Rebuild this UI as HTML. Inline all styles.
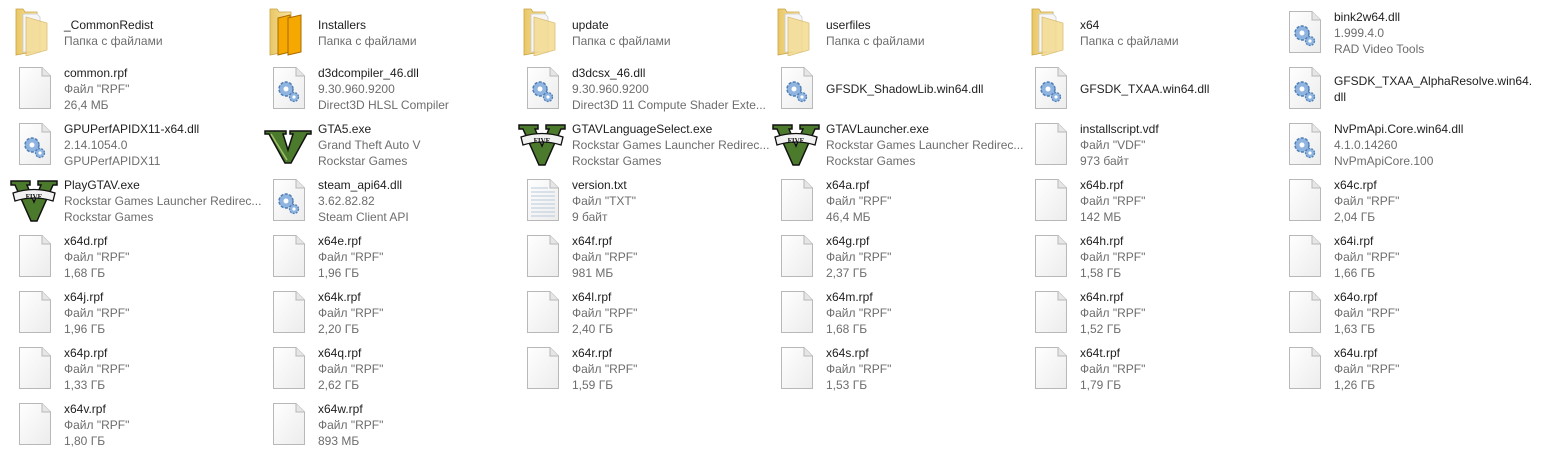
<!DOCTYPE html>
<html><head><meta charset="utf-8">
<style>
html,body{margin:0;padding:0;background:#fff;width:1567px;height:463px;overflow:hidden}
.t{position:absolute;width:254px;height:56px}
.t svg{position:absolute;left:10px;top:8px;width:48px;height:48px}
.x{position:absolute;left:64px;top:calc(50% + 5px);transform:translateY(-50%);font:12px "Liberation Sans","Noto Sans CJK SC",sans-serif;line-height:16px;color:#1e1e1e;white-space:nowrap}
.x span{display:block;color:#6d6d6d}
</style></head><body>
<svg width="0" height="0" style="position:absolute">
<defs>
<linearGradient id="pg" x1="0" y1="0" x2="1" y2="1"><stop offset="0" stop-color="#fff"/><stop offset="1" stop-color="#ececec"/></linearGradient>
<linearGradient id="fy" x1="0" y1="0" x2="1" y2="0"><stop offset="0" stop-color="#e9c766"/><stop offset="1" stop-color="#f8e4a0"/></linearGradient>
<symbol id="doc" viewBox="0 0 48 48"><path d="M9.5 3.5H32L40.5 12V44.5H9.5Z" fill="url(#pg)" stroke="#b8b8b8"/><path d="M32 3.5V12H40.5" fill="#e6e6e6" stroke="#b8b8b8"/></symbol>
<symbol id="dll" viewBox="0 0 48 48"><use href="#doc"/><circle cx="22" cy="25" r="7" fill="#8fb4e0" stroke="#4f7fb6" stroke-width="1.5" stroke-dasharray="3 1.5"/><circle cx="22" cy="25" r="2.5" fill="#fff"/><circle cx="30" cy="33" r="4.5" fill="#8fb4e0" stroke="#4f7fb6" stroke-width="1.3" stroke-dasharray="2 1.2"/><circle cx="30" cy="33" r="1.6" fill="#fff"/></symbol>
<symbol id="txt" viewBox="0 0 48 48"><use href="#doc"/><g stroke="#b9c8dc"><path d="M13 12H30M13 16H37M13 20H37M13 24H37M13 28H37M13 32H37M13 36H37M13 40H37"/></g></symbol>
<symbol id="fold" viewBox="0 0 48 48"><path d="M6 1H13L15 4H27V43L6 47Z" fill="url(#fy)" stroke="#c9a446" stroke-width=".8"/><path d="M13 6H27L30 9V44H13Z" fill="#f6f6f6" stroke="#ccc" stroke-width=".8"/><path d="M16 9L37 15V42L16 48Z" fill="#f3d988" opacity=".8" stroke="#d2b05a" stroke-width=".8"/></symbol>
<symbol id="foldo" viewBox="0 0 48 48"><path d="M6 1H13L15 4H27V43L6 47Z" fill="url(#fy)" stroke="#c9a446" stroke-width=".8"/><path d="M14 10L26 7V44L14 47Z" fill="#f5a800" stroke="#a86a00"/><path d="M24 10L37 7V44L24 47Z" fill="#f5a800" stroke="#a86a00"/></symbol>
<symbol id="v" viewBox="0 0 48 48"><path d="M1 11H22V14H19L24 30L29 14H26V11H47V14H43L27 43H21L5 14H1Z" fill="#4c7a2c" stroke="#111" stroke-width="1.5"/><path d="M7 14L23 40" stroke="#9bc06a" stroke-width="1.5"/></symbol>
<symbol id="v5" viewBox="0 0 48 48"><path d="M1 5H20V9H17L24 26L31 9H28V5H47V9H43L27 45H21L5 9H1Z" fill="#4c7a2c" stroke="#111" stroke-width="1.5"/><path d="M3 17Q24 10 45 17L43 25Q24 19 5 25Z" fill="#f2f2f2" stroke="#111" stroke-width="1.3"/><text x="24" y="23" font-size="7" font-weight="bold" text-anchor="middle" font-family="Liberation Serif,serif" fill="#111">FIVE</text></symbol>
</defs></svg>

<div class="t" style="left:0;top:0"><svg><use href="#fold"/></svg><div class="x">_CommonRedist<span>Папка с файлами</span></div></div>
<div class="t" style="left:254px;top:0"><svg><use href="#foldo"/></svg><div class="x">Installers<span>Папка с файлами</span></div></div>
<div class="t" style="left:508px;top:0"><svg><use href="#fold"/></svg><div class="x">update<span>Папка с файлами</span></div></div>
<div class="t" style="left:762px;top:0"><svg><use href="#fold"/></svg><div class="x">userfiles<span>Папка с файлами</span></div></div>
<div class="t" style="left:1016px;top:0"><svg><use href="#fold"/></svg><div class="x">x64<span>Папка с файлами</span></div></div>
<div class="t" style="left:1270px;top:0"><svg><use href="#dll"/></svg><div class="x">bink2w64.dll<span>1.999.4.0</span><span>RAD Video Tools</span></div></div>

<div class="t" style="left:0;top:56px"><svg><use href="#doc"/></svg><div class="x">common.rpf<span>Файл "RPF"</span><span>26,4 МБ</span></div></div>
<div class="t" style="left:254px;top:56px"><svg><use href="#dll"/></svg><div class="x">d3dcompiler_46.dll<span>9.30.960.9200</span><span>Direct3D HLSL Compiler</span></div></div>
<div class="t" style="left:508px;top:56px"><svg><use href="#dll"/></svg><div class="x">d3dcsx_46.dll<span>9.30.960.9200</span><span>Direct3D 11 Compute Shader Exte...</span></div></div>
<div class="t" style="left:762px;top:56px"><svg><use href="#dll"/></svg><div class="x">GFSDK_ShadowLib.win64.dll</div></div>
<div class="t" style="left:1016px;top:56px"><svg><use href="#dll"/></svg><div class="x">GFSDK_TXAA.win64.dll</div></div>
<div class="t" style="left:1270px;top:56px"><svg><use href="#dll"/></svg><div class="x">GFSDK_TXAA_AlphaResolve.win64.<br>dll</div></div>

<div class="t" style="left:0;top:112px"><svg><use href="#dll"/></svg><div class="x">GPUPerfAPIDX11-x64.dll<span>2.14.1054.0</span><span>GPUPerfAPIDX11</span></div></div>
<div class="t" style="left:254px;top:112px"><svg><use href="#v"/></svg><div class="x">GTA5.exe<span>Grand Theft Auto V</span><span>Rockstar Games</span></div></div>
<div class="t" style="left:508px;top:112px"><svg><use href="#v5"/></svg><div class="x">GTAVLanguageSelect.exe<span>Rockstar Games Launcher Redirec...</span><span>Rockstar Games</span></div></div>
<div class="t" style="left:762px;top:112px"><svg><use href="#v5"/></svg><div class="x">GTAVLauncher.exe<span>Rockstar Games Launcher Redirec...</span><span>Rockstar Games</span></div></div>
<div class="t" style="left:1016px;top:112px"><svg><use href="#doc"/></svg><div class="x">installscript.vdf<span>Файл "VDF"</span><span>973 байт</span></div></div>
<div class="t" style="left:1270px;top:112px"><svg><use href="#dll"/></svg><div class="x">NvPmApi.Core.win64.dll<span>4.1.0.14260</span><span>NvPmApiCore.100</span></div></div>

<div class="t" style="left:0;top:168px"><svg><use href="#v5"/></svg><div class="x">PlayGTAV.exe<span>Rockstar Games Launcher Redirec...</span><span>Rockstar Games</span></div></div>
<div class="t" style="left:254px;top:168px"><svg><use href="#dll"/></svg><div class="x">steam_api64.dll<span>3.62.82.82</span><span>Steam Client API</span></div></div>
<div class="t" style="left:508px;top:168px"><svg><use href="#txt"/></svg><div class="x">version.txt<span>Файл "TXT"</span><span>9 байт</span></div></div>
<div class="t" style="left:762px;top:168px"><svg><use href="#doc"/></svg><div class="x">x64a.rpf<span>Файл "RPF"</span><span>46,4 МБ</span></div></div>
<div class="t" style="left:1016px;top:168px"><svg><use href="#doc"/></svg><div class="x">x64b.rpf<span>Файл "RPF"</span><span>142 МБ</span></div></div>
<div class="t" style="left:1270px;top:168px"><svg><use href="#doc"/></svg><div class="x">x64c.rpf<span>Файл "RPF"</span><span>2,04 ГБ</span></div></div>

<div class="t" style="left:0;top:224px"><svg><use href="#doc"/></svg><div class="x">x64d.rpf<span>Файл "RPF"</span><span>1,68 ГБ</span></div></div>
<div class="t" style="left:254px;top:224px"><svg><use href="#doc"/></svg><div class="x">x64e.rpf<span>Файл "RPF"</span><span>1,96 ГБ</span></div></div>
<div class="t" style="left:508px;top:224px"><svg><use href="#doc"/></svg><div class="x">x64f.rpf<span>Файл "RPF"</span><span>981 МБ</span></div></div>
<div class="t" style="left:762px;top:224px"><svg><use href="#doc"/></svg><div class="x">x64g.rpf<span>Файл "RPF"</span><span>2,37 ГБ</span></div></div>
<div class="t" style="left:1016px;top:224px"><svg><use href="#doc"/></svg><div class="x">x64h.rpf<span>Файл "RPF"</span><span>1,58 ГБ</span></div></div>
<div class="t" style="left:1270px;top:224px"><svg><use href="#doc"/></svg><div class="x">x64i.rpf<span>Файл "RPF"</span><span>1,66 ГБ</span></div></div>

<div class="t" style="left:0;top:280px"><svg><use href="#doc"/></svg><div class="x">x64j.rpf<span>Файл "RPF"</span><span>1,96 ГБ</span></div></div>
<div class="t" style="left:254px;top:280px"><svg><use href="#doc"/></svg><div class="x">x64k.rpf<span>Файл "RPF"</span><span>2,20 ГБ</span></div></div>
<div class="t" style="left:508px;top:280px"><svg><use href="#doc"/></svg><div class="x">x64l.rpf<span>Файл "RPF"</span><span>2,40 ГБ</span></div></div>
<div class="t" style="left:762px;top:280px"><svg><use href="#doc"/></svg><div class="x">x64m.rpf<span>Файл "RPF"</span><span>1,68 ГБ</span></div></div>
<div class="t" style="left:1016px;top:280px"><svg><use href="#doc"/></svg><div class="x">x64n.rpf<span>Файл "RPF"</span><span>1,52 ГБ</span></div></div>
<div class="t" style="left:1270px;top:280px"><svg><use href="#doc"/></svg><div class="x">x64o.rpf<span>Файл "RPF"</span><span>1,63 ГБ</span></div></div>

<div class="t" style="left:0;top:336px"><svg><use href="#doc"/></svg><div class="x">x64p.rpf<span>Файл "RPF"</span><span>1,33 ГБ</span></div></div>
<div class="t" style="left:254px;top:336px"><svg><use href="#doc"/></svg><div class="x">x64q.rpf<span>Файл "RPF"</span><span>2,62 ГБ</span></div></div>
<div class="t" style="left:508px;top:336px"><svg><use href="#doc"/></svg><div class="x">x64r.rpf<span>Файл "RPF"</span><span>1,59 ГБ</span></div></div>
<div class="t" style="left:762px;top:336px"><svg><use href="#doc"/></svg><div class="x">x64s.rpf<span>Файл "RPF"</span><span>1,53 ГБ</span></div></div>
<div class="t" style="left:1016px;top:336px"><svg><use href="#doc"/></svg><div class="x">x64t.rpf<span>Файл "RPF"</span><span>1,79 ГБ</span></div></div>
<div class="t" style="left:1270px;top:336px"><svg><use href="#doc"/></svg><div class="x">x64u.rpf<span>Файл "RPF"</span><span>1,26 ГБ</span></div></div>

<div class="t" style="left:0;top:392px"><svg><use href="#doc"/></svg><div class="x">x64v.rpf<span>Файл "RPF"</span><span>1,80 ГБ</span></div></div>
<div class="t" style="left:254px;top:392px"><svg><use href="#doc"/></svg><div class="x">x64w.rpf<span>Файл "RPF"</span><span>893 МБ</span></div></div>
</body></html>
